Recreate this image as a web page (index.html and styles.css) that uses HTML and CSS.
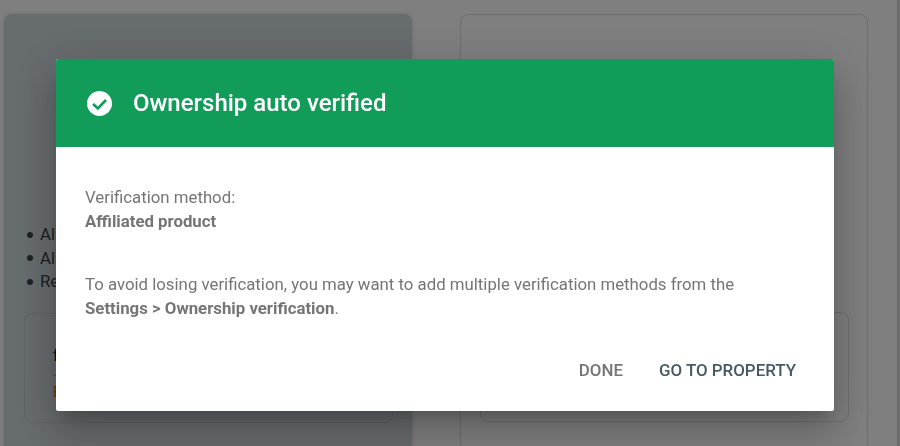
FILE: index.html
```html
<!DOCTYPE html>
<html lang="en">
<head>
  <meta charset="UTF-8">
  <meta name="viewport" content="width=device-width, initial-scale=1">
  <title>Ownership auto verified</title>
  <link rel="stylesheet" href="styles.css">
</head>
<body>
  <div class="page">
    <section class="card card-domain">
      <ul class="card-list">
        <li>All</li>
        <li>All</li>
        <li>Re</li>
      </ul>
      <div class="input-box">
        <div class="input-value">foo.com</div>
        <div class="input-hint">Enter domain</div>
      </div>
    </section>
    <section class="card card-prefix">
      <div class="input-box"></div>
    </section>
  </div>

  <div class="scrim">
    <div class="dialog" role="dialog" aria-labelledby="dialog-title">
      <header class="dialog-header">
        <svg class="dialog-icon" viewBox="0 0 25 25" aria-hidden="true">
          <circle cx="12.5" cy="12.5" r="12.5" fill="#fff"/>
          <path d="M6.1 13l4.7 4.5 8.2-8.5" fill="none" stroke="#119c59" stroke-width="2.6"/>
        </svg>
        <h1 id="dialog-title">Ownership auto verified</h1>
      </header>
      <div class="dialog-body">
        <p class="method">Verification method:<br><b>Affiliated product</b></p>
        <p>To avoid losing verification, you may want to add multiple verification methods from the <b>Settings &gt; Ownership verification</b>.</p>
      </div>
      <div class="dialog-actions">
        <button type="button" class="btn">DONE</button>
        <button type="button" class="btn btn-primary">GO TO PROPERTY</button>
      </div>
    </div>
  </div>
</body>
</html>
```

FILE: styles.css
```css
html, body {
  height: 100%;
}
body {
  font-family: Roboto, Arial, sans-serif;
  background: #fff;
  margin: 0;
  overflow: hidden;
}
.page {
  display: grid;
  grid-template-columns: 408px 408px;
  column-gap: 48px;
  padding: 14px 0 0 4px;
  height: 100%;
  box-sizing: border-box;
  overflow: hidden;
}
.card {
  height: 470px;
  box-sizing: border-box;
  border-radius: 8px;
  padding: 209px 19px 0 20px;
}
.card-domain {
  background: #cfd8dc;
  box-shadow: 0 0 5px rgba(0, 0, 0, 0.15);
}
.card-prefix {
  border: 1px solid #dadce0;
  padding: 297px 18px 0 19px;
}
.card-prefix .input-box {
  border-color: #e0e0e0;
}
.card-list {
  list-style: none;
  margin: 0 0 19.5px;
  padding: 0;
  font-size: 16.8px;
  line-height: 23.5px;
  color: #3c4043;
}
.card-list li {
  display: flex;
  align-items: center;
}
.card-list li::before {
  content: "";
  width: 6px;
  height: 6px;
  margin: 0 7px 0 3px;
  border-radius: 50%;
  background: #3c4043;
}
.input-box {
  height: 110px;
  box-sizing: border-box;
  border: 1px solid #bcc6cb;
  border-radius: 8px;
  padding: 29px 28px 0;
  white-space: nowrap;
  overflow: hidden;
}
.input-value {
  font-size: 16.8px;
  line-height: 24px;
  color: #000;
  padding-bottom: 8px;
  border-bottom: 1px solid #9aa0a6;
}
.input-hint {
  margin-top: 8px;
  font-size: 14px;
  color: #c5671c;
}
.scrim {
  position: fixed;
  inset: 0;
  background: rgba(0, 0, 0, 0.5);
  box-shadow: inset -3px 0 0 rgba(0, 0, 0, 0.14);
  padding: 59px 0 0 56px;
}
.dialog {
  width: 778px;
  height: 352px;
  display: flex;
  flex-direction: column;
  background: #fff;
  border-radius: 2px;
  overflow: hidden;
  box-shadow: 0 11px 15px -7px rgba(0, 0, 0, 0.2), 0 24px 38px 3px rgba(0, 0, 0, 0.14), 0 9px 46px 8px rgba(0, 0, 0, 0.12);
}
.dialog-header {
  height: 88px;
  flex: none;
  display: flex;
  align-items: center;
  gap: 21px;
  padding-left: 31px;
  background: #119c59;
  color: #fff;
}
.dialog-icon {
  width: 25px;
  height: 25px;
}
.dialog-header h1 {
  margin: 0;
  font-size: 24px;
  font-weight: 500;
}
.dialog-body {
  flex: 1;
  padding: 38px 60px 0 29px;
  font-size: 16.8px;
  line-height: 24px;
  color: #757575;
}
.dialog-body p {
  margin: 0;
}
.dialog-body .method {
  margin-bottom: 39px;
}
.dialog-body b {
  font-weight: 700;
}
.dialog-actions {
  display: flex;
  justify-content: flex-end;
  gap: 36px;
  padding: 0 38px 31px 0;
}
.btn {
  border: none;
  background: none;
  padding: 0;
  font-family: inherit;
  font-size: 16.9px;
  font-weight: 500;
  line-height: 20px;
  color: #757575;
  cursor: pointer;
}
.btn-primary {
  color: #455a64;
}
```
